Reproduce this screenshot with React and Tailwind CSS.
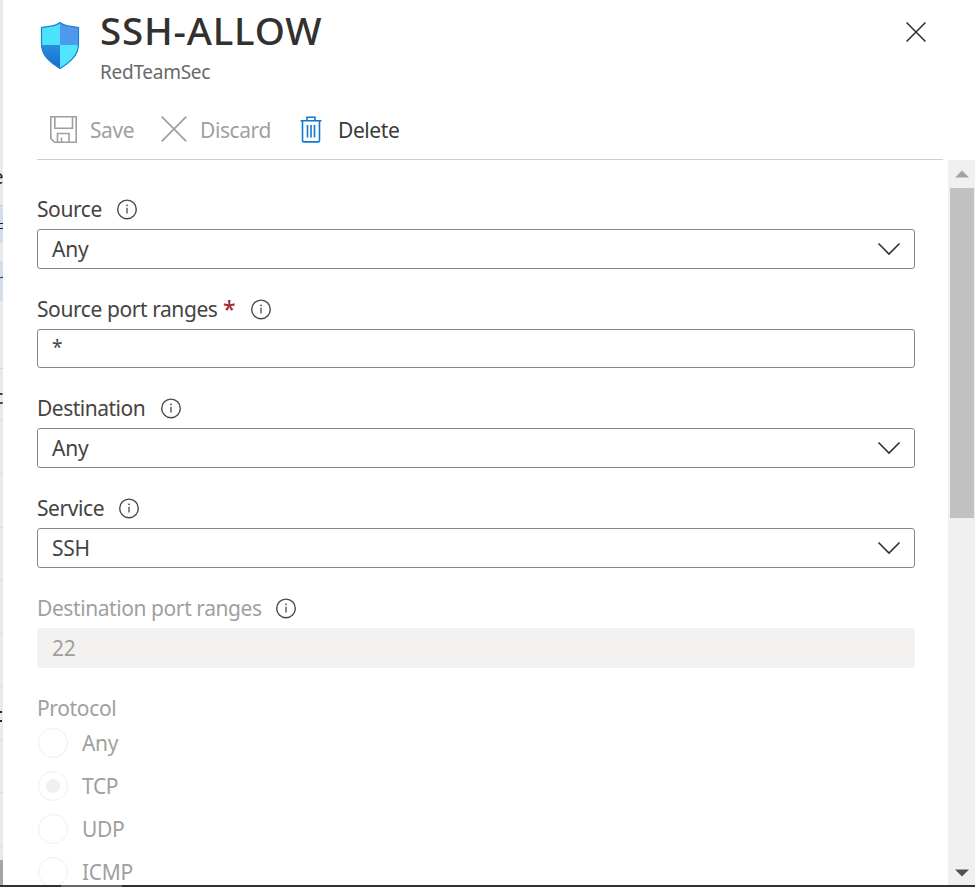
import React from "react";

function Info() {
  return (
    <svg width="22" height="22" viewBox="0 0 22 22" fill="none" className="shrink-0">
      <circle cx="11" cy="11.4" r="9.3" stroke="#4a4846" strokeWidth="1.4" />
      <path d="M11 9.700V15.400" stroke="#4a4846" strokeWidth="1.3" />
      <circle cx="11" cy="7.300" r="0.9" fill="#4a4846" />
    </svg>
  );
}

function Chevron() {
  return (
    <svg width="24" height="14" viewBox="0 0 24 14" fill="none" className="shrink-0">
      <path d="M1.5 1.5L12 12L22.5 1.5" stroke="#323130" strokeWidth="1.6" />
    </svg>
  );
}

function Field({ label, labelClass, labelColor = "text-[#454342]", required, value, valueClass = "tracking-[-0.25px]", boxClass = "h-10 border border-[#8a8886] text-[#454342]", select }) {
  return (
    <div className="mb-5">
      <div className={`flex h-10 items-center ${labelColor}`}>
        <span className={`shrink-0 whitespace-nowrap ${labelClass}`}>{label}</span>
        {required && <span className="w-[17px] shrink-0 pl-[4px] text-[23px] leading-[30px] font-medium text-[#a4262c]">*</span>}
        <span className="ml-[14px]"><Info /></span>
      </div>
      <div className={`flex items-center justify-between rounded-[3px] pr-[13px] pl-[14px] ${boxClass}`}>
        <span className={valueClass}>{value}</span>
        {select && <Chevron />}
      </div>
    </div>
  );
}

function Radio({ label, checked }) {
  return (
    <div className="flex h-[43px] items-start pt-[7px] pl-px">
      <span className="flex h-[30px] w-[30px] shrink-0 items-center justify-center rounded-full border border-[#f0efee]">
        {checked && <span className="h-[14px] w-[14px] rounded-full bg-[#f1f0ef]" />}
      </span>
      <span className="ml-[14px] leading-[31px] tracking-[-0.35px]">{label}</span>
    </div>
  );
}

function Shield() {
  return (
    <svg width="40" height="50" viewBox="0 0 40 50" className="shrink-0">
      <defs>
        <linearGradient id="dark" x1="0" y1="0" x2="0" y2="1">
          <stop offset="0" stopColor="#2b8de0" />
          <stop offset="1" stopColor="#156bcb" />
        </linearGradient>
        <linearGradient id="mid" x1="0" y1="0" x2="0" y2="1">
          <stop offset="0" stopColor="#5495eb" />
          <stop offset="1" stopColor="#4a9cee" />
        </linearGradient>
        <clipPath id="shield">
          <path d="M20 2.500C15 7 8 6 1.500 7.700V24C1.500 36 11 43 20 48.500C29 43 38.500 36 38.500 24V7.700C32 6 25 7 20 2.500Z" />
        </clipPath>
      </defs>
      <g clipPath="url(#shield)">
        <path d="M0 0H20V25H0Z" fill="#4ce2fb" />
        <path d="M20 0H40V25H20Z" fill="url(#mid)" />
        <path d="M0 25H20V50H0Z" fill="url(#dark)" />
        <path d="M20 25H40V50H20Z" fill="#50e6ff" />
      </g>
      <path d="M20 2.500C15 7 8 6 1.500 7.700V24C1.500 36 11 43 20 48.500C29 43 38.500 36 38.500 24V7.700C32 6 25 7 20 2.500Z" fill="none" stroke="#1d7fd0" strokeWidth="1.2" />
    </svg>
  );
}

function Cross({ size, color, width }) {
  return (
    <svg width={size} height={size} viewBox="0 0 26 26" fill="none" className="shrink-0">
      <path d="M0.700 0.700L25.300 25.300M25.300 0.700L0.700 25.300" stroke={color} strokeWidth={width} />
    </svg>
  );
}

function Backdrop() {
  return (
    <div className="flex w-[3px] shrink-0 flex-col overflow-hidden bg-[#e9e9e9] text-[19px] font-normal text-[#222]">
      <div className="h-[167px]" />
      <div className="flex h-[39px] justify-end border-b border-[#cfcfcf] leading-[21px]">e</div>
      <div className="flex h-[37px] flex-col gap-[4px] bg-[#d3dde8] pt-[17px]">
        <span className="h-px bg-[#222]" />
        <span className="h-px bg-[#222]" />
      </div>
      <div className="h-[18px]" />
      <div className="h-[40px] bg-[#d3dde8] pt-[16px]"><div className="h-px w-[3px] -rotate-12 bg-[#333]" /></div>
      <div className="h-[68px] border-b border-[#d5d5d5]" />
      <div className="flex h-[52px] justify-end border-b border-[#dadada] pt-[16px] leading-[24px]">c</div>
      <div className="h-[53px] border-b border-[#dadada]" />
      <div className="h-[54px] border-b border-[#dadada]" />
      <div className="h-[53px] border-b border-[#dadada]" />
      <div className="h-[53px] border-b border-[#dadada]" />
      <div className="h-[53px] border-b border-[#dadada]" />
      <div className="flex h-[53px] flex-col gap-[7px] border-b border-[#dadada] pt-[24px]">
        <span className="h-[2px] w-[2px] bg-[#222]" />
        <span className="h-[2px] w-[2px] bg-[#222]" />
      </div>
      <div className="h-[53px] border-b border-[#dadada]" />
      <div className="h-[54px] border-b border-[#dadada]" />
      <div className="h-[13px]" />
      <div className="flex-1 bg-[#a5a5a5]" />
    </div>
  );
}

export default function App() {
  return (
    <div className="flex h-[887px] w-[975px] flex-col overflow-hidden bg-white font-['Noto_Sans','Open_Sans',sans-serif] text-[21px] leading-[30px] font-normal tracking-[-0.42px]">
      <div className="flex h-[885px] shrink-0 overflow-hidden">
        <Backdrop />
        <div className="flex min-w-0 flex-1 flex-col">
          <header className="flex h-[100px] shrink-0 items-start pl-[37px]">
            <div className="pt-[20px]"><Shield /></div>
            <div className="ml-[20px] flex-1">
              <h1 className="h-[58px] pt-[6px] text-[38.5px] leading-[48px] font-medium tracking-[0.8px] whitespace-nowrap text-[#323130]">SSH-ALLOW</h1>
              <p className="text-[19px] leading-[28px] tracking-[-0.28px] text-[#6a6866]">RedTeamSec</p>
            </div>
            <div className="mt-[22px] mr-[49px]"><Cross size={20} color="#323130" width={2} /></div>
          </header>
          <div className="mr-[32px] ml-[34px] flex h-[60px] shrink-0 items-center border-b border-[#d2d0ce] pl-[13px] text-[#a19f9d]">
            <svg width="27" height="27" viewBox="0 0 27 27" fill="none" stroke="#a19f9d" strokeWidth="1.600" className="mb-px shrink-0">
              <path d="M0.800 0.800H26.200V26.200H4.500L0.800 22.500ZM4.800 1V12.200H22.500V1M7.500 26V17.500H19V26M11.500 26V21.500" />
            </svg>
            <span className="ml-[13px] w-[44px] whitespace-nowrap">Save</span>
            <span className="mb-px ml-[27px]"><Cross size={26} color="#a19f9d" width={1.7} /></span>
            <span className="ml-[13px] w-[71px] whitespace-nowrap">Discard</span>
            <svg width="22" height="27" viewBox="0 0 22 27" fill="none" stroke="#0f78d0" strokeWidth="1.600" className="mb-px ml-[29px] shrink-0">
              <path d="M0.500 4.700H21.500M7 4.500V1.200H15V4.500M2.500 5V24.500Q2.500 25.900 4 25.900H18Q19.500 25.900 19.500 24.500V5M7.500 9V21.500M11 9V21.500M14.500 9V21.500" />
            </svg>
            <span className="ml-[16px] text-[#3b3a39]">Delete</span>
          </div>
          <div className="flex min-h-0 flex-1">
            <main className="min-w-0 flex-1 overflow-hidden pt-[29px] pr-[33px] pl-[34px]">
              <Field label="Source" labelClass="w-[65px]" value="Any" select />
              <Field label="Source port ranges" labelClass="w-[182px]" required value="*" valueClass="pb-[3px] text-[19px]" boxClass="h-[39px] border border-[#8a8886] text-[#454342]" />
              <Field label="Destination" labelClass="w-[109px] tracking-[-0.5px]" value="Any" select />
              <Field label="Service" labelClass="w-[67px]" value="SSH" select />
              <Field label="Destination port ranges" labelClass="w-[224px]" labelColor="text-[#a19f9d]" value="22" boxClass="h-10 border border-[#f3f2f1] bg-[#f3f2f1] text-[#a19f9d]" />
              <div className="text-[#a19f9d]">
                <div className="h-[33px] pt-[5px] tracking-[-0.35px]">Protocol</div>
                <Radio label="Any" />
                <Radio label="TCP" checked />
                <Radio label="UDP" />
                <Radio label="ICMP" />
              </div>
            </main>
            <div className="flex w-[27px] shrink-0 flex-col items-center bg-[#f0f0f0]">
              <div className="flex h-[28px] items-center">
                <svg width="14" height="8" viewBox="0 0 14 8"><path d="M0 7.500L7 0.500L14 7.500Z" fill="#a3a3a3" /></svg>
              </div>
              <div className="ml-px h-[330px] w-[24px] bg-[#c1c1c1]" />
              <div className="mt-auto flex h-[25px] items-center">
                <svg width="14" height="8" viewBox="0 0 14 8"><path d="M0 0.500H14L7 7.500Z" fill="#505050" /></svg>
              </div>
            </div>
          </div>
        </div>
      </div>
      <footer className="flex h-[2px] shrink-0 bg-[#323132] pl-[61px]"><span className="h-[2px] w-[61px] bg-[#666]" /></footer>
    </div>
  );
}
